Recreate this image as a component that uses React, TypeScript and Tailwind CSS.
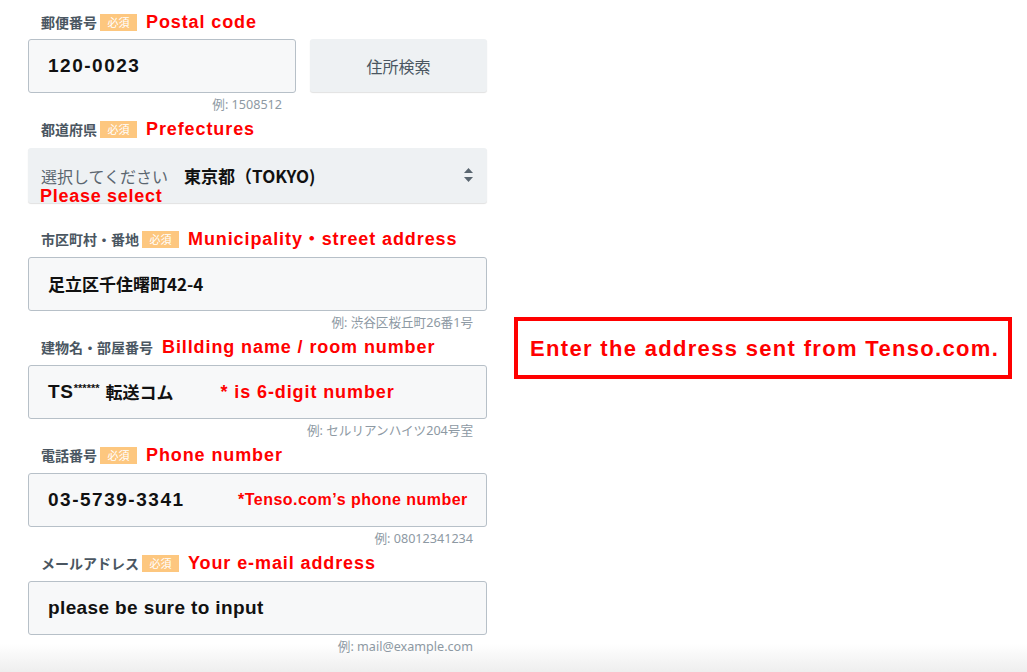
import React from "react";

const JP = "[font-family:'Noto_Sans_CJK_JP',sans-serif]";
const LAT = "[font-family:'Liberation_Sans','Noto_Sans_CJK_JP',sans-serif]";
const HINT = "[font-family:'Noto_Sans','Noto_Sans_CJK_JP',sans-serif]";

function Badge() {
  return (
    <span className={`${JP} ml-[3px] inline-flex h-[17px] w-[37px] items-center justify-center bg-[#fdc77f] text-[11px] font-normal leading-none text-white`}>
      必須
    </span>
  );
}

function Label({ jp, en, required = true }: { jp: string; en: string; required?: boolean }) {
  return (
    <div className="flex h-[24px] items-center pl-[13px]">
      <span className={`${JP} text-[14px] font-bold text-[#4a5661]`}>{jp}</span>
      {required && <Badge />}
      <span className={`${LAT} ml-[9px] text-[18px] font-bold leading-none tracking-[0.05em] text-[#ff0000]`}>{en}</span>
    </div>
  );
}

function Hint({ text }: { text: string }) {
  return (
    <div className={`${HINT} flex h-[24px] items-center justify-end pr-[14px] text-[12.6px] text-[#8d99a3]`}>
      {text}
    </div>
  );
}

function Input({ children }: { children: React.ReactNode }) {
  return (
    <div className="mt-[6px] flex h-[54px] items-center rounded-[3px] border border-[#b7c0c8] bg-[#f7f8f9] pl-[19px]">
      {children}
    </div>
  );
}

export default function App() {
  return (
    <div className="min-h-[672px] w-full bg-[linear-gradient(to_bottom,#ffffff_644px,#eeeeee_672px)]">
      <div className="flex">
        <div className="ml-[28px] w-[459px] pt-[10px]">
          {/* Postal */}
          <Label jp="郵便番号" en="Postal code" />
          <div className="mt-[5px] flex gap-[14px]">
            <div className="w-[268px]">
              <div className="flex h-[54px] items-center rounded-[3px] border border-[#b7c0c8] bg-[#f7f8f9] pl-[19px]">
                <span className={`${LAT} text-[19px] font-bold tracking-[0.08em] text-[#111]`}>120-0023</span>
              </div>
              <Hint text="例: 1508512" />
            </div>
            <div className={`${JP} flex h-[53px] flex-1 items-center justify-center rounded-[3px] bg-[#eef1f3] text-[16px] text-[#4a5661] shadow-[0_1px_1px_rgba(0,0,0,0.12)]`}>
              住所検索
            </div>
          </div>

          {/* Prefecture */}
          <Label jp="都道府県" en="Prefectures" />
          <div className="relative mt-[7px] flex h-[55px] items-center rounded-[3px] bg-[#eef1f3] pl-[13px] shadow-[0_1px_1px_rgba(0,0,0,0.12)]">
            <span className={`${JP} text-[16px] leading-none text-[#5b6670]`}>選択してください</span>
            <span className={`${JP} ml-[16px] text-[17px] font-bold leading-none text-[#111]`}>東京都（TOKYO)</span>
            <span className={`${LAT} absolute left-[12px] top-[39px] text-[18px] font-bold leading-none tracking-[0.04em] text-[#ff0000]`}>Please select</span>
            <svg className="absolute right-[14px] top-[20px]" width="9" height="14" viewBox="0 0 9 14">
              <path d="M4.5 0 L9 5 L0 5 Z" fill="#5a6670" />
              <path d="M0 9 L9 9 L4.5 14 Z" fill="#5a6670" />
            </svg>
          </div>
          <div className="h-[24px]" />

          {/* Municipality */}
          <Label jp="市区町村・番地" en="Municipality・street address" />
          <Input>
            <span className={`${JP} text-[17px] font-bold text-[#111]`}>足立区千住曙町42-4</span>
          </Input>
          <Hint text="例: 渋谷区桜丘町26番1号" />

          {/* Building */}
          <Label jp="建物名・部屋番号" en="Billding name / room number" required={false} />
          <Input>
            <span className={`${LAT} text-[19px] font-bold tracking-[0.04em] text-[#111]`}>TS</span>
            <span className={`${LAT} -mt-[8px] text-[11px] font-bold text-[#111]`}>******</span>
            <span className={`${JP} ml-[6px] text-[17px] font-bold text-[#111]`}>転送コム</span>
            <span className={`${LAT} ml-[47px] text-[18px] font-bold tracking-[0.05em] text-[#ff0000]`}>* is 6-digit number</span>
          </Input>
          <Hint text="例: セルリアンハイツ204号室" />

          {/* Phone */}
          <Label jp="電話番号" en="Phone number" />
          <Input>
            <span className={`${LAT} w-[190px] text-[19px] font-bold tracking-[0.08em] text-[#111]`}>03-5739-3341</span>
            <span className={`${LAT} text-[16px] font-bold tracking-[0.03em] text-[#ff0000]`}>*Tenso.com’s phone number</span>
          </Input>
          <Hint text="例: 08012341234" />

          {/* Email */}
          <Label jp="メールアドレス" en="Your e-mail address" />
          <Input>
            <span className={`${LAT} text-[19px] font-bold tracking-[0.02em] text-[#111]`}>please be sure to input</span>
          </Input>
          <Hint text="例: mail@example.com" />
        </div>

        <div className="ml-[27px] mt-[317px]">
          <div className="flex h-[62px] w-[498px] items-center border-[4px] border-[#ff0000] pl-[12px]">
            <span className={`${LAT} text-[22px] font-bold tracking-[0.06em] text-[#ff0000]`}>
              Enter the address sent from Tenso.com.
            </span>
          </div>
        </div>
      </div>
    </div>
  );
}
